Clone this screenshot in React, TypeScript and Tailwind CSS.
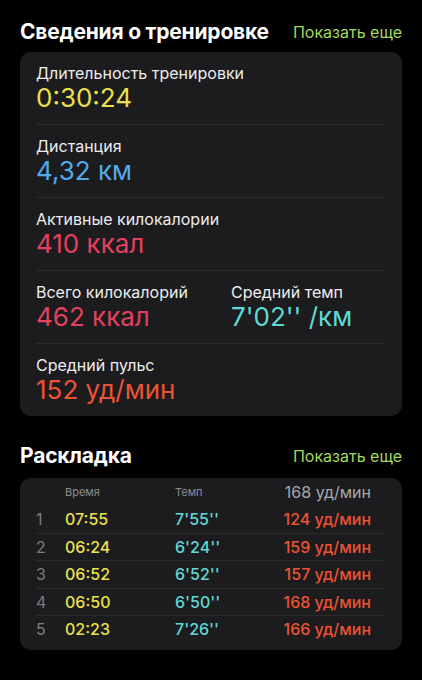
const FONT = "font-['Inter','Noto_Sans',sans-serif]";

const STATS = [
  [{ label: 'Длительность тренировки', value: '0:30:24', color: 'text-[#ece04c]' }],
  [{ label: 'Дистанция', value: '4,32 км', color: 'text-[#53a9ea]' }],
  [{ label: 'Активные килокалории', value: '410 ккал', color: 'text-[#e2415f]' }],
  [
    { label: 'Всего килокалорий', value: '462 ккал', color: 'text-[#e2415f]' },
    { label: 'Средний темп', value: "7'02'' /км", color: 'text-[#5fd9d5]' },
  ],
  [{ label: 'Средний пульс', value: '152 уд/мин', color: 'text-[#ec5234]' }],
];

const SPLITS = [
  { n: 1, time: '07:55', pace: "7'55''", hr: '124 уд/мин' },
  { n: 2, time: '06:24', pace: "6'24''", hr: '159 уд/мин' },
  { n: 3, time: '06:52', pace: "6'52''", hr: '157 уд/мин' },
  { n: 4, time: '06:50', pace: "6'50''", hr: '168 уд/мин' },
  { n: 5, time: '02:23', pace: "7'26''", hr: '166 уд/мин' },
];

function SectionHeader({ title }: { title: string }) {
  return (
    <div className="flex items-center justify-between">
      <h2 className="text-[21px] font-bold leading-7 text-white tracking-[-0.2px]">{title}</h2>
      <span className="text-[16px] leading-5 text-[#a2d95e]">Показать еще</span>
    </div>
  );
}

export default function App() {
  return (
    <div className={`${FONT} min-h-[680px] w-[422px] bg-black px-5 pt-[18px] overflow-hidden`}>
      {/* Workout details */}
      <SectionHeader title="Сведения о тренировке" />
      <div className="mt-[6px] rounded-[11px] bg-[#1c1c1e] px-4">
        {STATS.map((row, i) => (
          <div
            key={i}
            className={`grid grid-cols-[195px_1fr] py-[11px] ${i > 0 ? 'border-t border-[#2b2b2d]' : ''}`}
          >
            {row.map((s) => (
              <div key={s.label} className="flex flex-col">
                <span className="text-[16px] leading-5 text-[#ededed] whitespace-nowrap">{s.label}</span>
                <span className={`text-[26px] leading-[30px] whitespace-nowrap ${s.color}`}>{s.value}</span>
              </div>
            ))}
          </div>
        ))}
      </div>

      {/* Splits */}
      <div className="mt-[26px]">
        <SectionHeader title="Раскладка" />
      </div>
      <div className="mt-[8px] rounded-[11px] bg-[#1c1c1e] px-4 pb-[7px]">
        <div className="grid grid-cols-[29px_110px_1fr_auto] items-end pt-[4px] pb-[3px]">
          <span />
          <span className="text-[11px] leading-4 text-[#8d8d92] pb-[2px]">Время</span>
          <span className="text-[11px] leading-4 text-[#8d8d92] pb-[2px]">Темп</span>
          <span className="pr-[15px] text-[16px] leading-5 text-[#a7a7ab]">168 уд/мин</span>
        </div>
        {SPLITS.map((s, i) => (
          <div
            key={s.n}
            className={`grid grid-cols-[29px_110px_1fr_auto] items-center h-[27.5px] ${i > 0 ? 'border-t border-[#2b2b2d]' : ''}`}
          >
            <span className="text-[16px] text-[#7c7c80]">{s.n}</span>
            <span className="text-[16px] font-medium text-[#ece04c]">{s.time}</span>
            <span className="text-[16px] font-medium text-[#5fd9d5]">{s.pace}</span>
            <span className="pr-[15px] text-[16px] font-medium text-[#ec5234]">{s.hr}</span>
          </div>
        ))}
      </div>
    </div>
  );
}
